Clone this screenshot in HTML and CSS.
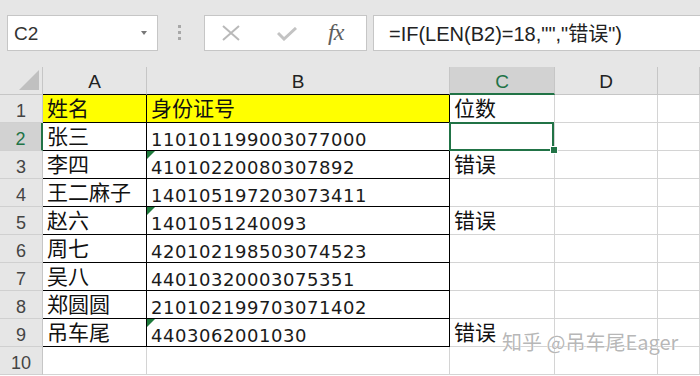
FILE: index.html
```html
<!DOCTYPE html>
<html lang="zh">
<head>
<meta charset="utf-8">
<title>Excel</title>
<link rel="stylesheet" href="styles.css">
</head>
<body>
<div class="topbar">
  <div class="namebox"><span class="nm">C2</span><span class="caret"></span></div>
  <div class="grip"><i></i><i></i><i></i></div>
  <div class="fxbox">
    <svg class="ic-x" width="18" height="16" viewBox="0 0 18 16"><path d="M1 1 L17 15 M17 1 L1 15" stroke="#b9b9b9" stroke-width="2" fill="none"/></svg>
    <svg class="ic-ok" width="20" height="14" viewBox="0 0 20 14"><path d="M1 6 L7 12 L19 1" stroke="#c3c3c3" stroke-width="3" fill="none"/></svg>
    <span class="fx">fx</span>
  </div>
  <div class="formula">=IF(LEN(B2)=18,"","错误")</div>
</div>
<div class="sheet">
  <div class="corner"><svg width="42" height="27" viewBox="0 0 42 27"><polygon points="39,3 39,23 19,23" fill="#c0c0c0"/></svg></div>
  <div class="ch k">A</div>
  <div class="ch k">B</div>
  <div class="ch on">C</div>
  <div class="ch">D</div>
  <div class="ch"></div>

  <div class="rh">1</div>
  <div class="c k y cn">姓名</div>
  <div class="c k y cn">身份证号</div>
  <div class="c cn">位数</div>
  <div class="c"></div>
  <div class="c"></div>

  <div class="rh on">2</div>
  <div class="c k cn">张三</div>
  <div class="c k num">110101199003077000</div>
  <div class="c sc"><span class="sel"></span><span class="handle"></span></div>
  <div class="c"></div>
  <div class="c"></div>

  <div class="rh">3</div>
  <div class="c k cn">李四</div>
  <div class="c k num t"><span class="tri"></span>41010220080307892</div>
  <div class="c cn">错误</div>
  <div class="c"></div>
  <div class="c"></div>

  <div class="rh">4</div>
  <div class="c k cn">王二麻子</div>
  <div class="c k num">140105197203073411</div>
  <div class="c"></div>
  <div class="c"></div>
  <div class="c"></div>

  <div class="rh">5</div>
  <div class="c k cn">赵六</div>
  <div class="c k num t"><span class="tri"></span>1401051240093</div>
  <div class="c cn">错误</div>
  <div class="c"></div>
  <div class="c"></div>

  <div class="rh">6</div>
  <div class="c k cn">周七</div>
  <div class="c k num">420102198503074523</div>
  <div class="c"></div>
  <div class="c"></div>
  <div class="c"></div>

  <div class="rh">7</div>
  <div class="c k cn">吴八</div>
  <div class="c k num">44010320003075351</div>
  <div class="c"></div>
  <div class="c"></div>
  <div class="c"></div>

  <div class="rh">8</div>
  <div class="c k cn">郑圆圆</div>
  <div class="c k num">210102199703071402</div>
  <div class="c"></div>
  <div class="c"></div>
  <div class="c"></div>

  <div class="rh">9</div>
  <div class="c k cn">吊车尾</div>
  <div class="c k num t"><span class="tri"></span>4403062001030</div>
  <div class="c cn">错误</div>
  <div class="c"></div>
  <div class="c"></div>

  <div class="rh">10</div>
  <div class="c"></div>
  <div class="c"></div>
  <div class="c"></div>
  <div class="c"></div>
  <div class="c"></div>
</div>
<div class="watermark">知乎 @吊车尾Eager</div>
</body>
</html>
```
FILE: styles.css
```css
* { box-sizing: border-box; }
html, body { margin: 0; padding: 0; }
body {
  width: 700px;
  height: 376px;
  overflow: hidden;
  background: #fff;
  position: relative;
  font-family: "Liberation Sans", "Noto Sans CJK SC", sans-serif;
}

/* top formula bar */
.topbar {
  height: 67px;
  background: #e6e6e6;
  display: flex;
  align-items: flex-start;
  padding-top: 15px;
}
.namebox {
  margin-left: 7px;
  width: 151px;
  height: 36px;
  background: #fff;
  border: 1px solid #c6c6c6;
  display: flex;
  align-items: center;
  justify-content: space-between;
  padding: 2px 10px 0 6px;
  font-size: 19px;
  color: #333;
}
.caret {
  width: 0;
  height: 0;
  border-left: 3px solid transparent;
  border-right: 3px solid transparent;
  border-top: 4px solid #777;
  margin-top: -2px;
}
.grip {
  margin-left: 20px;
  padding-top: 10px;
  display: flex;
  flex-direction: column;
  gap: 3px;
}
.grip i {
  display: block;
  width: 3px;
  height: 3px;
  background: #a8a8a8;
}
.fxbox {
  margin-left: 23px;
  width: 163px;
  height: 36px;
  background: #fff;
  border: 1px solid #c6c6c6;
  display: flex;
  align-items: center;
}
.ic-x { margin-left: 17px; }
.ic-ok { margin-left: 37px; margin-top: 2px; }
.fx {
  margin-left: 31px;
  font-family: "Liberation Serif", serif;
  font-style: italic;
  font-size: 24px;
  color: #5e5e5e;
  letter-spacing: -1px;
  margin-top: -2px;
}
.formula {
  margin-left: 6px;
  flex: 1;
  height: 36px;
  background: #fff;
  border: 1px solid #c6c6c6;
  border-right: none;
  padding: 2px 0 0 15px;
  font-size: 20px;
  line-height: 32px;
  color: #222;
  white-space: nowrap;
}

/* sheet grid */
.sheet {
  display: grid;
  grid-template-columns: 43px 104px 303px 105px 103px 42px;
  grid-auto-rows: 28px;
}
.corner {
  background: #e6e6e6;
  border-right: 1px solid #c6c6c6;
  border-bottom: 1px solid #c6c6c6;
}
.corner svg { display: block; }
.ch {
  background: #e6e6e6;
  border-right: 1px solid #c6c6c6;
  border-bottom: 1px solid #c6c6c6;
  text-align: center;
  font-size: 19px;
  line-height: 28px;
  padding-top: 1px;
  color: #222;
}
.ch.k { border-bottom-color: #000; }
.ch.on {
  background: #d2d2d2;
  color: #217346;
  border-bottom: 2px solid #217346;
}
.rh {
  background: #e6e6e6;
  border-right: 1px solid #c6c6c6;
  border-bottom: 1px solid #d0d0d0;
  text-align: center;
  font-size: 18px;
  line-height: 28px;
  padding-top: 2px;
  color: #444;
}
.rh.on {
  background: #d2d2d2;
  color: #217346;
  border-right: 2px solid #217346;
}
.c {
  background: #fff;
  border-right: 1px solid #d4d4d4;
  border-bottom: 1px solid #d4d4d4;
  padding-left: 4px;
  white-space: nowrap;
  color: #111;
}
.c.k {
  border-right-color: #000;
  border-bottom-color: #000;
}
.c.y { background: #ffff00; }
.cn {
  font-family: "Noto Sans CJK SC", sans-serif;
  font-size: 21px;
  line-height: 24px;
}
.num {
  font-family: "DejaVu Sans", sans-serif;
  font-size: 18px;
  letter-spacing: 0.55px;
  line-height: 28px;
  padding-top: 3px;
  color: #1a1a1a;
}
.t { position: relative; }
.tri {
  position: absolute;
  left: 0;
  top: 0;
  width: 0;
  height: 0;
  border-top: 8px solid #1e7a3c;
  border-right: 8px solid transparent;
}
.sc { position: relative; }
.sel {
  position: absolute;
  left: -1px;
  top: -1px;
  right: 0;
  bottom: -1px;
  border: 2px solid #217346;
}
.handle {
  position: absolute;
  left: 101px;
  top: 24px;
  width: 6px;
  height: 6px;
  background: #217346;
  outline: 1px solid #fff;
}

.watermark {
  position: absolute;
  left: 502px;
  top: 329px;
  font-family: "Noto Sans CJK SC", sans-serif;
  font-size: 20px;
  line-height: 26px;
  color: rgba(160, 160, 160, 0.75);
  text-shadow: 0 0 1px #fff, 0 0 1px #fff;
  white-space: nowrap;
}
```
